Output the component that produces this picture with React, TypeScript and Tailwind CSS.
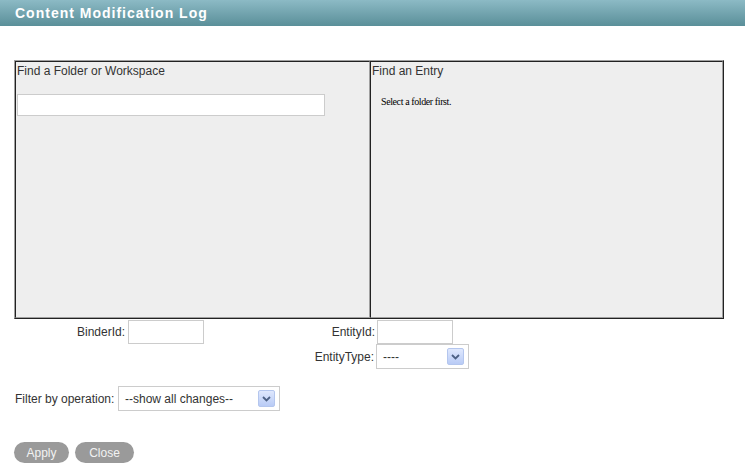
import React from 'react';

const Chevron: React.FC = () => (
  <span className="flex h-[17px] w-[17px] items-center justify-center rounded-[2px] border border-[#b4c6ee] bg-gradient-to-b from-[#dfe8fd] to-[#b9cbf6]">
    <svg width="9" height="6" viewBox="0 0 9 6">
      <path d="M1 1 L4.5 4.5 L8 1" fill="none" stroke="#4d6185" strokeWidth="1.8" />
    </svg>
  </span>
);

const FakeSelect: React.FC<{ value: string; width: string }> = ({ value, width }) => (
  <div className={`flex h-[25px] ${width} items-center justify-between border border-[#cccccc] bg-white pl-[6px] pr-[4px] text-[12px] text-[#333]`}>
    <span>{value}</span>
    <Chevron />
  </div>
);

const App: React.FC = () => {
  return (
    <div className="h-[470px] w-[745px] bg-white font-['Liberation_Sans',Arial,sans-serif] text-[12px] text-[#333]">
      <header className="flex h-[26px] items-center bg-gradient-to-b from-[#8cbac5] to-[#5a8f99] pl-[15px]">
        <h1 className="text-[14px] font-bold tracking-[1px] text-white">Content Modification Log</h1>
      </header>

      <div className="px-[14px] pt-[34px]">
        <div className="flex h-[259px] w-[710px] border border-t-[#a0a0a0] border-l-[#a0a0a0] border-b-[#222] border-r-[#222]">
          <div className="w-[355px] border border-t-[#222] border-l-[#222] border-b-[#a0a0a0] border-r-[#a0a0a0] bg-[#eeeeee] pl-[1px]">
            <div>Find a Folder or Workspace</div>
            <div className="mt-[14px] h-[22px] w-[308px] border border-[#cccccc] bg-white" />
          </div>
          <div className="flex-1 border border-t-[#222] border-l-[#222] border-b-[#a0a0a0] border-r-[#a0a0a0] bg-[#eeeeee] pl-[1px]">
            <div>Find an Entry</div>
            <div className="mt-[14px] pl-[9px] font-['Liberation_Serif','Times_New_Roman',serif] text-[10px] tracking-[-0.4px] text-black">
              Select a folder first.
            </div>
          </div>
        </div>

        <div className="mt-[1px] flex">
          <div className="flex w-[114px] items-center justify-end pr-[3px]">BinderId:</div>
          <div className="h-[24px] w-[76px] border border-[#cccccc] bg-white" />
          <div className="flex w-[173px] items-center justify-end pr-[2px]">EntityId:</div>
          <div className="h-[24px] w-[76px] border border-[#cccccc] bg-white" />
        </div>
        <div className="flex">
          <div className="flex w-[362px] items-center justify-end pr-[2px]">EntityType:</div>
          <FakeSelect value="----" width="w-[93px]" />
        </div>

        <div className="mt-[17px] flex items-center">
          <div className="w-[104px] pl-[1px]">Filter by operation:</div>
          <FakeSelect value="--show all changes--" width="w-[162px]" />
        </div>

        <div className="mt-[31px] flex gap-[6px]">
          <button className="h-[21px] w-[55px] rounded-full bg-[#9a9a9a] text-[12px] text-[#f2f2f2]">Apply</button>
          <button className="h-[21px] w-[59px] rounded-full bg-[#9a9a9a] text-[12px] text-[#f2f2f2]">Close</button>
        </div>
      </div>
    </div>
  );
};

export default App;
